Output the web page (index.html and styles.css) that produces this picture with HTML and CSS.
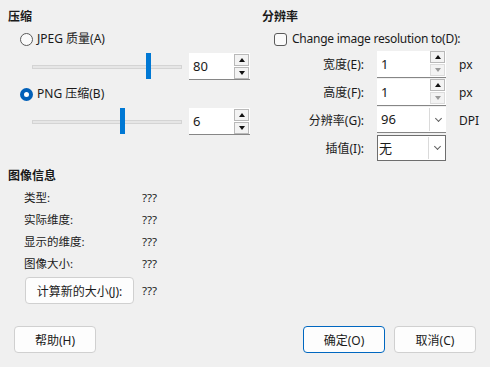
FILE: index.html
```html
<!DOCTYPE html>
<html lang="zh-CN">
<head>
  <meta charset="UTF-8">
  <title>图像属性</title>
  <link rel="stylesheet" href="styles.css">
</head>
<body>
  <div class="dialog">
    <div class="top">
      <!-- 压缩 -->
      <div class="compress">
        <div class="group-title">压缩</div>
        <label class="radio-row"><span class="radio"></span>JPEG 质量(A)</label>
        <div class="slider-row">
          <div class="slider"><div class="track"></div><div class="thumb" style="left: 114px"></div></div>
          <div class="spin">
            <div class="spin-text">80</div>
            <div class="spin-btns">
              <span class="spin-btn"><span class="arrow-up"></span></span>
              <span class="spin-btn"><span class="arrow-down"></span></span>
            </div>
          </div>
        </div>
        <label class="radio-row"><span class="radio checked"></span>PNG 压缩(B)</label>
        <div class="slider-row">
          <div class="slider"><div class="track"></div><div class="thumb" style="left: 88px"></div></div>
          <div class="spin">
            <div class="spin-text">6</div>
            <div class="spin-btns">
              <span class="spin-btn"><span class="arrow-up"></span></span>
              <span class="spin-btn"><span class="arrow-down"></span></span>
            </div>
          </div>
        </div>
      </div>

      <!-- 分辨率 -->
      <div class="resolution">
        <div class="group-title">分辨率</div>
        <label class="check-row"><span class="checkbox"></span>Change image resolution to(D):</label>
        <div class="res-grid">
          <span class="res-label">宽度(E):</span>
          <div class="spin small">
            <div class="spin-text">1</div>
            <div class="spin-btns">
              <span class="spin-btn"><span class="arrow-up"></span></span>
              <span class="spin-btn off"><span class="arrow-down"></span></span>
            </div>
          </div>
          <span class="unit">px</span>

          <span class="res-label">高度(F):</span>
          <div class="spin small">
            <div class="spin-text">1</div>
            <div class="spin-btns">
              <span class="spin-btn"><span class="arrow-up"></span></span>
              <span class="spin-btn off"><span class="arrow-down"></span></span>
            </div>
          </div>
          <span class="unit">px</span>

          <span class="res-label">分辨率(G):</span>
          <div class="combo">
            <div class="combo-text">96</div>
            <div class="combo-btn"><span class="chevron"></span></div>
          </div>
          <span class="unit">DPI</span>

          <span class="res-label">插值(I):</span>
          <div class="combo focused">
            <div class="combo-text">无</div>
            <div class="combo-btn"><span class="chevron"></span></div>
          </div>
          <span class="unit"></span>
        </div>
      </div>
    </div>

    <!-- 图像信息 -->
    <div class="info">
      <div class="group-title">图像信息</div>
      <div class="info-grid">
        <span>类型:</span><span>???</span>
        <span>实际维度:</span><span>???</span>
        <span>显示的维度:</span><span>???</span>
        <span>图像大小:</span><span>???</span>
      </div>
      <div class="calc-row">
        <button class="btn calc">计算新的大小(J):</button>
        <span>???</span>
      </div>
    </div>

    <div class="footer">
      <button class="btn">帮助(H)</button>
      <div class="footer-right">
        <button class="btn default">确定(O)</button>
        <button class="btn">取消(C)</button>
      </div>
    </div>
  </div>
</body>
</html>
```

FILE: styles.css
```css
/* General */
body {
  margin: 0;
  background: #f0f0f0;
  font-family: "Noto Sans", "Noto Sans CJK SC", sans-serif;
  font-size: 12px;
  color: #1a1a1a;
}

.dialog {
  width: 490px;
  height: 367px;
  box-sizing: border-box;
  padding: 9px 14px 0 8px;
}

.group-title {
  font-weight: bold;
  height: 16px;
  line-height: 16px;
}

.top {
  display: grid;
  grid-template-columns: 254px 1fr;
}

/* Compression column */
.radio-row,
.check-row {
  display: flex;
  align-items: center;
  gap: 4px;
  height: 18px;
  line-height: 18px;
}

.compress .radio-row {
  margin-left: 12px;
  margin-top: 5px;
}

.radio {
  width: 11px;
  height: 11px;
  border: 1px solid #5a5a5a;
  border-radius: 50%;
  background: #fafafa;
}

.radio.checked {
  width: 5px;
  height: 5px;
  border: 4px solid #005fb8;
  background: #fff;
}

.slider-row {
  display: flex;
  align-items: center;
  margin-top: 5px;
  height: 27px;
}

.slider {
  position: relative;
  width: 150px;
  height: 27px;
  margin-left: 24px;
}

.track {
  position: absolute;
  left: 0;
  right: 0;
  top: 12px;
  height: 2px;
  background: #e6e6e6;
  border: 1px solid #d4d4d4;
}

.thumb {
  position: absolute;
  top: 0;
  width: 5px;
  height: 26px;
  background: #0078d4;
}

.spin {
  display: flex;
  align-items: center;
  margin-left: 7px;
  width: 61px;
  height: 27px;
  background: #fff;
  border-bottom: 1px solid #868686;
  box-sizing: border-box;
}

.spin-text {
  flex: 1;
  padding-left: 4px;
  font-size: 13px;
}

.spin-btns {
  display: flex;
  flex-direction: column;
  gap: 1px;
  margin-right: 1px;
}

.spin-btn {
  display: flex;
  align-items: center;
  justify-content: center;
  width: 13px;
  height: 10px;
  border: 1px solid #b9b9b9;
  background: #f3f3f3;
}

.arrow-up {
  border-left: 3px solid transparent;
  border-right: 3px solid transparent;
  border-bottom: 4px solid #111;
}

.arrow-down {
  border-left: 3px solid transparent;
  border-right: 3px solid transparent;
  border-top: 4px solid #111;
}

.spin-btn.off {
  border-color: #dcdcdc;
}

.spin-btn.off .arrow-down {
  border-top-color: #9a9a9a;
}

/* Resolution column */
.check-row {
  margin-left: 12px;
  margin-top: 5px;
  letter-spacing: -0.25px;
}

.checkbox {
  width: 11px;
  height: 11px;
  border: 1px solid #5a5a5a;
  border-radius: 3px;
  background: #fafafa;
  margin-right: 1px;
}

.res-grid {
  display: grid;
  grid-template-columns: 102px 69px 1fr;
  grid-auto-rows: 28px;
  column-gap: 13px;
  align-items: center;
  margin-top: 2px;
}

.res-label {
  text-align: right;
}

.res-grid .spin {
  margin-left: 0;
  width: 69px;
}

.combo {
  display: flex;
  align-items: stretch;
  height: 26px;
  background: #fff;
  border-bottom: 1px solid #868686;
  box-sizing: border-box;
}

.combo.focused {
  border: 1px solid #6e6e6e;
}

.combo-text {
  flex: 1;
  line-height: 25px;
  padding-left: 4px;
  font-size: 13px;
}

.combo.focused .combo-text {
  padding-left: 1px;
  line-height: 24px;
}

.combo-btn {
  width: 16px;
  margin: 1px 0 1px 0;
  border-left: 1px solid #dadada;
  display: flex;
  align-items: center;
  justify-content: center;
}

.chevron {
  width: 4px;
  height: 4px;
  border-right: 1px solid #606060;
  border-bottom: 1px solid #606060;
  transform: rotate(45deg);
  margin-top: -3px;
}

/* Image info */
.info {
  margin-top: 6px;
}

.info-grid {
  display: grid;
  grid-template-columns: 118px 1fr;
  grid-auto-rows: 22px;
  align-items: center;
  padding-left: 16px;
  margin-top: 2px;
  font-size: 11.5px;
}

.calc-row {
  display: flex;
  align-items: center;
  gap: 8px;
  margin-left: 17px;
  margin-top: 3px;
  font-size: 11.5px;
}

/* Buttons */
.btn {
  font-family: inherit;
  font-size: 12px;
  color: #1a1a1a;
  width: 82px;
  height: 27px;
  background: #fdfdfd;
  border: 1px solid #d0d0d0;
  border-radius: 4px;
  padding: 0;
}

.btn.calc {
  width: 109px;
}

.btn.default {
  border-color: #0067c0;
}

.footer {
  display: flex;
  justify-content: space-between;
  align-items: center;
  margin-top: 22px;
  padding-left: 6px;
}

.footer-right {
  display: flex;
  gap: 9px;
}
```
